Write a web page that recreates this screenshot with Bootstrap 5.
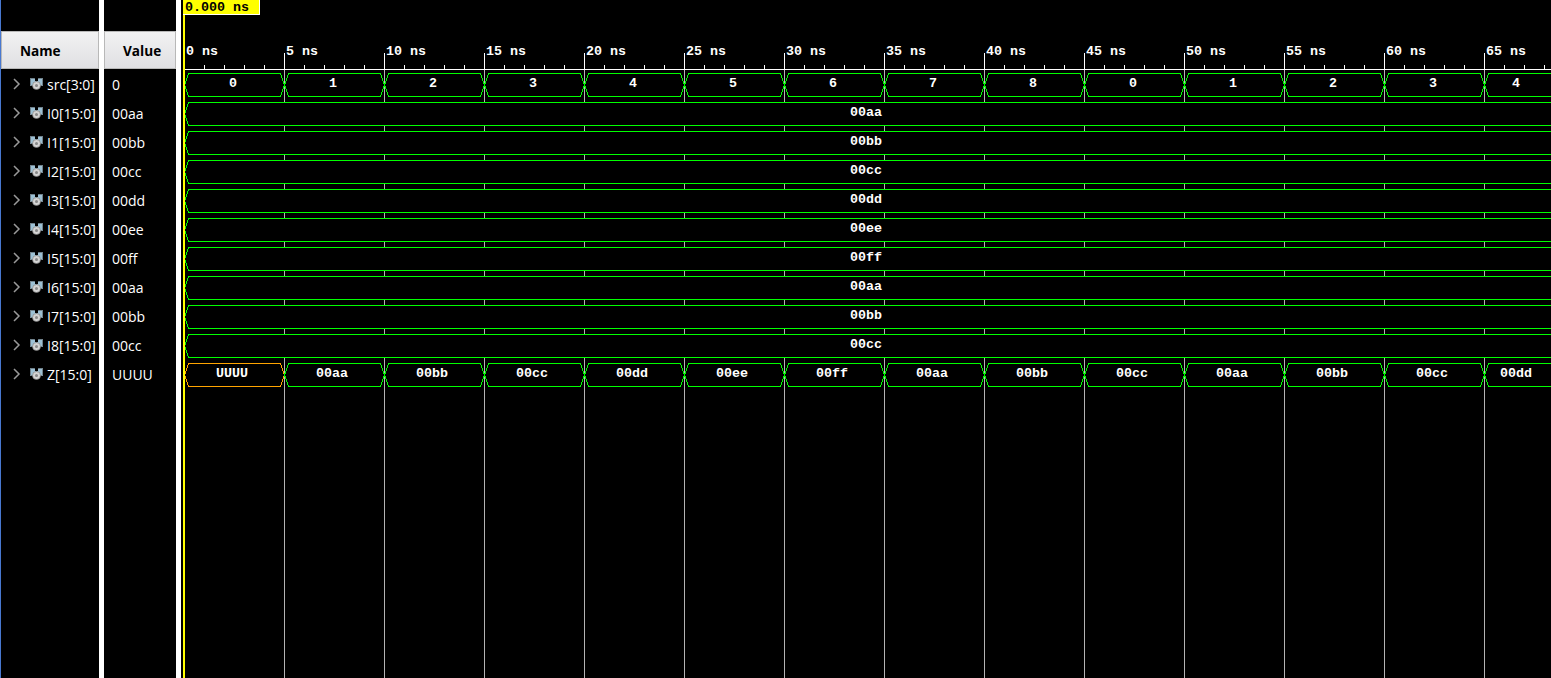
<!DOCTYPE html>
<html lang="en">
<head>
<meta charset="utf-8">
<title>Waveform viewer</title>
<link href="https://cdn.jsdelivr.net/npm/bootstrap@5.3.0/dist/css/bootstrap.min.css" rel="stylesheet">
<style>
body{background:#000;color:#fff;font-family:"Open Sans","Noto Sans",sans-serif;font-size:14px;line-height:29px}
.viewer{height:678px;width:1551px}
.names{width:99px;border-left:1px solid #4878d0}
.vals{width:72px}
.gutter{width:5px;background:#fff}
.col-head{margin-top:31px;height:38px;line-height:37px;background:linear-gradient(#f2f2f2,#e0e0e3);color:#000;font-weight:700;font-size:13.6px;border:1px solid #b8b8b8}
.names .col-head,.vals .col-head{padding-left:18px}
.sig{height:29px;white-space:nowrap}
.names .sig{padding-left:11px}
.vals .sig{padding-left:8px}
.sig-name{margin-left:3px}
.lists{padding-top:1px}
.wave{width:1370px;background:#000}
.cursor-line{left:2px;top:0;width:2px;height:678px;background:#ff0}
.cursor-tag{left:2px;top:0;width:77px;height:15px;background:#ff0;border:solid #fff;border-width:0 1px 1px 0}
svg{display:block}
svg text{font-family:"Liberation Mono",monospace;font-weight:700;font-size:13.33px}
</style>
<script src="https://cdn.jsdelivr.net/npm/bootstrap@5.3.0/dist/js/bootstrap.bundle.min.js"></script>
</head>
<body class="m-0 overflow-hidden">
<div class="viewer d-flex">
  <div class="names flex-shrink-0"><div class="col-head">Name</div><div class="lists" id="names"></div></div>
  <div class="gutter flex-shrink-0"></div>
  <div class="vals flex-shrink-0"><div class="col-head">Value</div><div class="lists" id="vals"></div></div>
  <div class="gutter flex-shrink-0"></div>
  <div class="wave flex-shrink-0 position-relative">
    <div id="wave"></div>
    <div class="cursor-line position-absolute"></div>
    <div class="cursor-tag position-absolute"><svg width="76" height="14"><text x="2" y="11">0.000 ns</text></svg></div>
  </div>
</div>
<script>
const X0 = 3, STEP = 100, W = 1370;
const buses = [['src[3:0]','0'],['I0[15:0]','00aa'],['I1[15:0]','00bb'],['I2[15:0]','00cc'],['I3[15:0]','00dd'],['I4[15:0]','00ee'],['I5[15:0]','00ff'],['I6[15:0]','00aa'],['I7[15:0]','00bb'],['I8[15:0]','00cc'],['Z[15:0]','UUUU']];
const steps = {0:'0 1 2 3 4 5 6 7 8 0 1 2 3 4'.split(' '), 10:'UUUU 00aa 00bb 00cc 00dd 00ee 00ff 00aa 00bb 00cc 00aa 00bb 00cc 00dd'.split(' ')};
const icon = '<svg class="ms-2 flex-shrink-0" width="15" height="13"><path d="M1 0h5v3h3V0h5v8H1z" fill="#9cc0d4"/><path d="M1 .5h4.5M9.5 .5H14M1.5 0v7.5H4M13.500 0v7.5H11" stroke="#72838d" fill="none"/><path d="M5.500 0h4L7.500 4z" fill="#000"/><circle cx="7.500" cy="7.500" r="4" fill="#d4d4d4" stroke="#777" stroke-width=".6"/><circle cx="7.500" cy="7.500" r="1.500" fill="#888"/></svg>';
const chev = '<svg class="flex-shrink-0" width="9" height="13"><path d="M2 1l5 5-5 5" fill="none" stroke="#999" stroke-width="1.5"/></svg>';
document.getElementById('names').innerHTML = buses.map(b => `<div class="sig d-flex align-items-center">${chev}${icon}<span class="sig-name">${b[0]}</span></div>`).join('');
document.getElementById('vals').innerHTML = buses.map(b => `<div class="sig">${b[1]}</div>`).join('');
const label = (s, x, y) => `<text x="${x}" y="${y}" fill="#fff">${s}</text>`;
let g = '<g shape-rendering="crispEdges"><path d="M3 69.5H1370" stroke="#fff"/>', t = '';
for (let i = 0; i < 70; i++) if (i % 5) g += `<path d="M${X0+20*i+.5} 65v4" stroke="#fff"/>`;
for (let i = 0; i < 14; i++) {
  const x = X0 + STEP*i;
  if (i) g += `<path d="M${x+.5} 53v17" stroke="#fff"/><path d="M${x+.5} 70v608" stroke="#b4b4b4"/>`;
  t += label(i*5 + ' ns', x + 2, 55);
}
buses.forEach((b, r) => {
  const top = 73 + 29*r, m = top + 11.5;
  if (steps[r]) steps[r].forEach((s, i) => {
    const a = X0 + STEP*i + .5, z = a + 100, u = s === 'UUUU';
    g += `<path d="M${z} ${m+.5}L${z-4} ${top+.5}H${a+4}L${a} ${m+.5}L${a+4} ${top+23.5}H${z-4}z" fill="none" stroke="${u ? '#ffa500' : '#0f0'}"/>`;
    const cx = i === 13 ? 1335 : X0 + STEP*i + (s.length > 1 ? 48 : 49);
    t += label(s, cx - s.length*4, top + 14);
  });
  else {
    g += `<path d="M${W+9} ${top+.5}H7.5L3.5 ${m+.5}L7.5 ${top+23.5}H${W+9}" fill="#000" stroke="#0f0"/>`;
    t += label(b[1], 669, top + 14);
  }
});
document.getElementById('wave').innerHTML = `<svg width="${W}" height="678">${g}</g>${t}</svg>`;
</script>
</body>
</html>
